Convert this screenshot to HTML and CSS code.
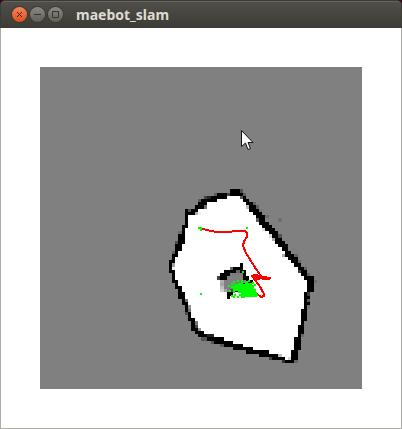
FILE: index.html
```html
<!DOCTYPE html>
<html lang="en">
<head>
<meta charset="utf-8">
<meta name="viewport" content="width=device-width, initial-scale=1">
<title>maebot_slam</title>
<link rel="stylesheet" href="styles.css">
</head>
<body>
<div class="window">
  <header class="titlebar">
    <div class="controls">
      <button class="control control-close" type="button" aria-label="Close">
        <svg viewBox="0 0 15 15"><path d="M5 5l5 5M10 5l-5 5"/></svg>
      </button>
      <button class="control" type="button" aria-label="Minimize">
        <svg viewBox="0 0 15 15"><path d="M4 7.500h7"/></svg>
      </button>
      <button class="control" type="button" aria-label="Maximize">
        <svg viewBox="0 0 15 15"><path d="M4.500 4.500h6v6h-6z"/></svg>
      </button>
    </div>
    <h1 class="title">maebot_slam</h1>
  </header>
  <main class="content">
    <svg class="map" viewBox="40 67 322 322" role="img" aria-label="Occupancy grid map">
      <g id="grid" transform="translate(40 67) scale(3.22)" shape-rendering="crispEdges"></g>
      <g class="trail" shape-rendering="crispEdges">
        <path d="M201 228L206 230L214 231.500L232 231.500L236 231L245 231L247 233L247 237L244 241L243 246L246 253L251 261L256 269L261 276"/>
        <path d="M251 276L256 275L263 277L271 278M251 276L256 279L265 278M254 279L259 285L264 294L264 296L261 297L256 293"/>
        <path d="M252 276L258 276L262 278L270 278" class="thick"/>
      </g>
      <g id="particles" class="particles" shape-rendering="crispEdges">
        <path d="M238 283h3v-1h2v2h2v-3h3v2h4v2h2v4h2v3h1v5h-13v-1h-3v-3h-3v-2h-5v-3h-2v-2h3v-2h4z"/>
      </g>
      <path class="cursor" d="M241.500 130.500V146.500L245.500 143L248 149.500L250.500 148.500L248 142.500H253Z"/>
    </svg>
  </main>
</div>
<script src="map.js"></script>
</body>
</html>
```
FILE: styles.css
```css
* {
  box-sizing: border-box;
}

body {
  margin: 0;
  background: #300a1a;
}

.window {
  display: flex;
  flex-direction: column;
  min-height: 100vh;
}

.titlebar {
  display: flex;
  align-items: center;
  gap: 13px;
  height: 28px;
  padding: 0 11px;
  border: 1px solid #3c3b37;
  border-bottom: 0;
  border-radius: 5px 5px 0 0;
  background: linear-gradient(#504f49, #3c3b36);
  box-shadow: inset 0 1px #65635c;
}

.controls {
  display: flex;
  gap: 3px;
}

.control {
  width: 15px;
  height: 15px;
  padding: 0;
  border: 0;
  border-radius: 50%;
  background: linear-gradient(#8b8980, #605f58);
  box-shadow: 0 0 0 1px #3b3a35;
  color: #35342f;
}

.control-close {
  background: linear-gradient(#f5855d, #df4f1d);
  color: #51200f;
}

.control svg {
  display: block;
  width: 15px;
  height: 15px;
  fill: none;
  stroke: currentColor;
}

.title {
  margin: 0;
  color: #dfdbd2;
  font: bold 14px/20px "Noto Sans", "Open Sans", sans-serif;
}

.content {
  flex: 1;
  padding: 39px;
  border: 1px solid #aeaca9;
  border-top: 0;
  background: #fff;
}

.map {
  display: block;
  width: 100%;
  background: #808080;
}

.trail {
  fill: none;
  stroke: #f00;
  stroke-width: 2;
}

.trail .thick {
  stroke-width: 3;
}

.particles {
  fill: #0f0;
}

.cursor {
  fill: #fff;
  stroke: #111;
}
```
FILE: map.js
```js
const SVG_NS = "http://www.w3.org/2000/svg";
const grid = document.getElementById("grid");
const particles = document.getElementById("particles");

function rect(parent, x, y, width, height, fill) {
  const el = document.createElementNS(SVG_NS, "rect");
  el.setAttribute("x", x);
  el.setAttribute("y", y);
  el.setAttribute("width", width);
  el.setAttribute("height", height);
  if (fill) el.setAttribute("fill", fill);
  parent.appendChild(el);
}

// Wall cells for each grid row: left run first and last, right run first and last.
const firstRow = 38;
const walls = [
  [59, 60, 60, 61], [55, 57, 59, 62], [52, 57, 62, 63], [50, 54, 63, 64],
  [49, 51, 64, 65], [48, 50, 64, 66], [45, 48, 65, 67], [45, 47, 66, 68],
  [45, 45, 67, 69], [45, 45, 67, 69], [45, 45, 68, 70], [44, 45, 69, 71],
  [44, 44, 70, 72], [44, 44, 71, 73], [43, 44, 72, 73], [43, 44, 73, 74],
  [43, 44, 73, 75], [42, 43, 74, 76], [42, 43, 75, 76], [42, 42, 76, 77],
  [41, 42, 76, 78], [41, 41, 77, 79], [40, 41, 78, 80], [40, 40, 79, 80],
  [40, 40, 80, 81], [40, 41, 80, 82], [41, 41, 81, 83], [41, 41, 82, 84],
  [41, 42, 83, 84], [42, 42, 83, 84], [42, 43, 83, 84], [43, 43, 83, 84],
  [43, 44, 82, 83], [43, 44, 82, 83], [44, 44, 82, 83], [44, 45, 82, 83],
  [45, 45, 82, 82], [45, 45, 81, 82], [45, 46, 81, 82], [46, 46, 81, 82],
  [46, 47, 81, 82], [47, 47, 81, 81], [47, 48, 80, 81], [47, 48, 80, 81],
  [48, 50, 80, 81], [49, 53, 80, 80], [51, 56, 79, 80], [54, 59, 79, 80],
  [57, 62, 79, 80], [60, 65, 79, 80], [64, 70, 78, 79], [68, 73, 78, 79],
  [71, 75, 78, 79], [75, 76, 77, 78]
];

walls.forEach(([a, b, c, d], i) => {
  const row = firstRow + i;
  rect(grid, a, row, d - a + 1, 1, "#fff");
  rect(grid, a, row, b - a + 1, 1, "#000");
  rect(grid, c, row, d - c + 1, 1, "#000");
});

// Partly observed cells: column, row, run length, grey level.
const shades = [
  [62, 38, 1, 80], [54, 39, 1, 90], [58, 39, 1, 70], [51, 40, 1, 65],
  [52, 40, 1, 35], [49, 41, 1, 90], [51, 43, 1, 110], [46, 44, 1, 80],
  [48, 45, 1, 175], [49, 45, 1, 240], [63, 39, 1, 95], [62, 40, 1, 90],
  [66, 42, 1, 100], [67, 43, 1, 95], [64, 43, 1, 190], [68, 44, 1, 115],
  [70, 46, 1, 110], [67, 47, 1, 90], [74, 47, 1, 112],
  [69, 50, 1, 225], [71, 52, 1, 220], [74, 52, 1, 80], [43, 51, 1, 105],
  [42, 54, 1, 75], [41, 57, 1, 95], [41, 61, 1, 160], [41, 62, 1, 240],
  [72, 53, 1, 170], [75, 58, 1, 175], [79, 58, 1, 100],
  [80, 60, 1, 105], [82, 62, 1, 100], [80, 63, 1, 65], [83, 64, 1, 95],
  [85, 66, 1, 110], [83, 70, 1, 60], [83, 72, 1, 90], [83, 74, 1, 115],
  [45, 72, 1, 110], [46, 74, 1, 145], [46, 75, 1, 115], [45, 76, 1, 75],
  [48, 79, 1, 120], [48, 80, 1, 70], [49, 81, 1, 150], [52, 83, 2, 35],
  [50, 84, 2, 85], [53, 85, 1, 85], [56, 86, 1, 90], [81, 83, 1, 105],
  [74, 89, 1, 190], [77, 90, 1, 215], [71, 90, 1, 65], [75, 91, 1, 50],
  [79, 91, 1, 100],
  [62, 61, 1, 0], [59, 62, 1, 100], [60, 62, 3, 0], [57, 63, 4, 0],
  [61, 63, 1, 100], [62, 63, 2, 0], [56, 64, 3, 0], [59, 64, 4, 125],
  [63, 64, 1, 0], [55, 65, 1, 65], [56, 65, 2, 0], [58, 65, 5, 128],
  [63, 65, 2, 0], [56, 66, 1, 175], [57, 66, 7, 128], [64, 66, 2, 0],
  [56, 67, 1, 165], [57, 67, 5, 128], [62, 67, 1, 90], [63, 67, 2, 0],
  [56, 68, 1, 190], [57, 68, 4, 128], [56, 69, 1, 205], [57, 69, 1, 160],
  [58, 69, 1, 128], [59, 69, 1, 80], [60, 69, 2, 0], [58, 70, 2, 0],
  [58, 71, 1, 0]
];

shades.forEach(([col, row, length, level]) => {
  rect(grid, col, row, length, 1, `rgb(${level} ${level} ${level})`);
});

// Scattered pose estimates around the main cluster.
const poses = [
  [198, 227], [200, 229], [246, 227], [200, 293], [242, 271], [228, 285],
  [231, 283], [233, 281], [229, 290], [235, 288], [233, 291], [231, 295],
  [234, 294], [237, 296], [239, 294], [241, 296], [234, 285], [252, 282],
  [254, 284], [256, 294], [248, 280], [237, 280], [241, 280], [238, 289],
  [243, 296], [233, 296]
];

poses.forEach(([x, y]) => rect(particles, x, y, 2, 2));
rect(particles, 199, 227, 3, 2);
```
